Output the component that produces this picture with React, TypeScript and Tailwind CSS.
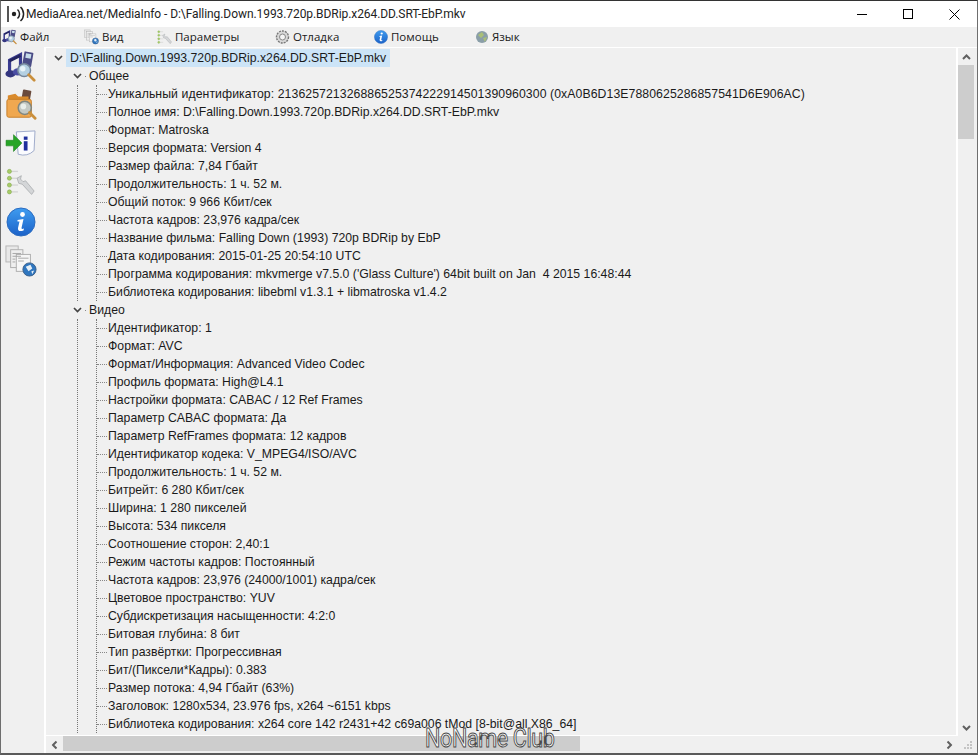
import type { ReactNode } from 'react'

type Group = { title: string; rows: string[] }

const groups: Group[] = [
  {
    title: 'Общее',
    rows: [
      'Уникальный идентификатор: 213625721326886525374222914501390960300 (0xA0B6D13E7880625286857541D6E906AC)',
      'Полное имя: D:\\Falling.Down.1993.720p.BDRip.x264.DD.SRT-EbP.mkv',
      'Формат: Matroska',
      'Версия формата: Version 4',
      'Размер файла: 7,84 Гбайт',
      'Продолжительность: 1 ч. 52 м.',
      'Общий поток: 9 966 Кбит/сек',
      'Частота кадров: 23,976 кадра/сек',
      'Название фильма: Falling Down (1993) 720p BDRip by EbP',
      'Дата кодирования: 2015-01-25 20:54:10 UTC',
      "Программа кодирования: mkvmerge v7.5.0 ('Glass Culture') 64bit built on Jan  4 2015 16:48:44",
      'Библиотека кодирования: libebml v1.3.1 + libmatroska v1.4.2'
    ]
  },
  {
    title: 'Видео',
    rows: [
      'Идентификатор: 1',
      'Формат: AVC',
      'Формат/Информация: Advanced Video Codec',
      'Профиль формата: High@L4.1',
      'Настройки формата: CABAC / 12 Ref Frames',
      'Параметр CABAC формата: Да',
      'Параметр RefFrames формата: 12 кадров',
      'Идентификатор кодека: V_MPEG4/ISO/AVC',
      'Продолжительность: 1 ч. 52 м.',
      'Битрейт: 6 280 Кбит/сек',
      'Ширина: 1 280 пикселей',
      'Высота: 534 пикселя',
      'Соотношение сторон: 2,40:1',
      'Режим частоты кадров: Постоянный',
      'Частота кадров: 23,976 (24000/1001) кадра/сек',
      'Цветовое пространство: YUV',
      'Субдискретизация насыщенности: 4:2:0',
      'Битовая глубина: 8 бит',
      'Тип развёртки: Прогрессивная',
      'Бит/(Пиксели*Кадры): 0.383',
      'Размер потока: 4,94 Гбайт (63%)',
      'Заголовок: 1280x534, 23.976 fps, x264 ~6151 kbps',
      'Библиотека кодирования: x264 core 142 r2431+42 c69a006 tMod [8-bit@all X86_64]'
    ]
  }
]

function AppIcon() {
  return (
    <svg width="19" height="18" viewBox="0 0 19 18" className="shrink-0">
      <rect x="0" y="1" width="2" height="16" fill="#555" />
      <circle cx="7" cy="9" r="2.2" fill="#222" />
      <path d="M10.5 4.5a6 6 0 0 1 0 9M13.5 2a9.5 9.5 0 0 1 0 14" fill="none" stroke="#222" strokeWidth="1.5" />
    </svg>
  )
}

function MusicGlass({ size }: { size: number }) {
  return (
    <svg width={size} height={size} viewBox="0 0 34 34">
      <path d="M5 24 L5 10 L17 4 L17 20" fill="none" stroke="#3a3c90" strokeWidth="3.5" />
      <path d="M5 11 L17 5" stroke="#23245f" strokeWidth="3" />
      <ellipse cx="6" cy="25" rx="5.5" ry="4" fill="#34367f" />
      <ellipse cx="14" cy="23" rx="5.5" ry="4" fill="#4a4da3" />
      <rect x="20" y="1" width="10" height="16" rx="1" fill="#4b4c86" transform="rotate(10 25 9)" />
      <rect x="22" y="3" width="6" height="5" fill="#c6dcea" transform="rotate(10 25 9)" />
      <circle cx="21" cy="21" r="7" fill="#b4d0e2" stroke="#74859a" strokeWidth="1.6" />
      <circle cx="19.5" cy="19.5" r="3" fill="#e8f3f8" />
      <path d="M26 26 L32 32" stroke="#c98f3c" strokeWidth="3" strokeLinecap="round" />
    </svg>
  )
}

function FolderGlass() {
  return (
    <svg width="32" height="32" viewBox="0 0 34 34">
      <rect x="18" y="1" width="9" height="14" rx="1" fill="#6a4a3c" transform="rotate(10 22 8)" />
      <path d="M3 11 L3 7 L11 5 L14 8 L25 8 L25 14 Z" fill="#d98a2c" />
      <rect x="2" y="11" width="26" height="19" rx="2" fill="#f0a850" stroke="#c57d28" />
      <circle cx="21" cy="20" r="7" fill="#c4c9c4" stroke="#80867f" strokeWidth="1.6" />
      <circle cx="19.5" cy="18.5" r="3" fill="#e9eeea" />
      <path d="M26 25 L32 31" stroke="#c98f3c" strokeWidth="3" strokeLinecap="round" />
    </svg>
  )
}

function ExportIcon() {
  return (
    <svg width="32" height="28" viewBox="0 0 34 30">
      <path d="M12 2 L32 1 L31 22 Q24 29 14 26 Z" fill="#fafbfe" stroke="#9aa7c8" />
      <rect x="20" y="7" width="4" height="3.5" fill="#1f2f9c" />
      <rect x="20" y="12" width="4" height="10" fill="#1f2f9c" />
      <path d="M1 11 L9 11 L9 5 L18 14 L9 23 L9 17 L1 17 Z" fill="#27a527" stroke="#1a7c1a" strokeWidth="0.6" />
    </svg>
  )
}

function WrenchIcon({ size }: { size: number }) {
  return (
    <svg width={size} height={size} viewBox="0 0 34 34">
      {[4, 12, 20, 28].map((y) => (
        <g key={y}>
          <path d={`M6 ${y} L14 ${y}`} stroke="#d4d4d4" strokeWidth="1.5" />
          <circle cx="4" cy={y} r="2.4" fill="#a8cc68" stroke="#7ba544" strokeWidth="0.6" />
        </g>
      ))}
      <path d="M13 12 L18 9 L17 13 L20 16 L23 15 L33 27 L30 31 L19 19 L15 18 Z" fill="#d4d6d8" stroke="#a0a3a7" strokeWidth="0.8" />
    </svg>
  )
}

function InfoBall({ size }: { size: number }) {
  return (
    <svg width={size} height={size} viewBox="0 0 30 30">
      <defs>
        <linearGradient id="ball" x1="0" y1="0" x2="0" y2="1">
          <stop offset="0" stopColor="#3f9cf0" />
          <stop offset="1" stopColor="#1c62c8" />
        </linearGradient>
      </defs>
      <circle cx="15" cy="15" r="14" fill="url(#ball)" stroke="#2c6cc0" />
      <circle cx="16.5" cy="7.5" r="2.4" fill="#fff" />
      <path d="M11.5 13 L17.5 12 L15.5 21 Q15.5 22.5 18 21.5 L17.5 23.5 Q11.5 25.5 12 21 L13.5 14.5 L11.5 14.5 Z" fill="#fff" />
    </svg>
  )
}

function DocsGlobe({ size }: { size: number }) {
  return (
    <svg width={size} height={size} viewBox="0 0 34 34">
      <rect x="1" y="1" width="13" height="17" fill="#e8e8e8" stroke="#b4b4b4" />
      <rect x="6" y="5" width="13" height="19" fill="#efefef" stroke="#adadad" />
      <rect x="12" y="10" width="15" height="18" fill="#f6f6f6" stroke="#adadad" />
      <path d="M8 9h9M8 12h9M8 15h3M8 18h3M14 14h11M14 17h6" stroke="#a4a4a4" />
      <circle cx="26" cy="26" r="7" fill="#2f76bf" stroke="#3b5f8a" />
      <path d="M22 23 L27 21 L29 25 L25 28 Z M28 28 L31 27 L29 31 Z" fill="#e4eef6" />
    </svg>
  )
}

function GlobeSmall() {
  return (
    <svg width="14" height="14" viewBox="0 0 14 14">
      <circle cx="7" cy="7" r="6" fill="#8a9ea8" />
      <path d="M3 5 L7 2 L9 5 L6 8 Z M8 8 L12 7 L10 12 Z" fill="#a9bf78" />
    </svg>
  )
}

function GearSmall() {
  return (
    <svg width="15" height="14" viewBox="0 0 15 14">
      <circle cx="7.5" cy="7" r="6" fill="#d8d8d8" stroke="#777" strokeWidth="1.4" strokeDasharray="2 1" />
      <circle cx="7.5" cy="7" r="3" fill="#f4f4f4" stroke="#888" />
    </svg>
  )
}

function Chevron() {
  return (
    <svg width="9" height="6" viewBox="0 0 9 6">
      <path d="M1 1 L4.5 4.5 L8 1" fill="none" stroke="#444" strokeWidth="1.7" />
    </svg>
  )
}

function ArrowBtn({ dir }: { dir: 'up' | 'down' | 'left' | 'right' }) {
  const rotate = { up: 'rotate-180', down: '', left: 'rotate-90', right: '-rotate-90' }[dir]
  return (
    <svg width="9" height="6" viewBox="0 0 9 6" className={rotate}>
      <path d="M1 1 L4.5 4.5 L8 1" fill="none" stroke="#606060" strokeWidth="2" />
    </svg>
  )
}

function MenuItem({ icon, label, width }: { icon: ReactNode; label: string; width: string }) {
  return (
    <div className={`flex h-5 items-center gap-[3px] ${width}`}>
      <span className="flex w-[15px] justify-center">{icon}</span>
      <span>{label}</span>
    </div>
  )
}

function TreeRow({ text }: { text: string }) {
  // the long digit string runs a little wider in the original's hinted font
  const wide = text.startsWith('Уникальный')
  return (
    <div className="flex h-[18px] items-center">
      <span className="w-[10px] border-t border-dotted border-[#888]" />
      <span className={`pl-[1px] whitespace-pre ${wide ? 'tracking-[0.08px]' : ''}`}>{text}</span>
    </div>
  )
}

function TreeGroup({ group }: { group: Group }) {
  return (
    <div>
      <div className="flex h-[18px] items-center">
        <span className="flex w-[10px] justify-center">
          <Chevron />
        </span>
        <span className="ml-[3px] mr-[3px] w-[1px] border-t border-dotted border-[#888]" />
        <span>{group.title}</span>
      </div>
      <div className="ml-[5px] border-l border-dotted border-[#777] pl-[18px]">
        <div className="border-l border-dotted border-[#777]">
          {group.rows.map((row) => (
            <TreeRow key={row} text={row} />
          ))}
        </div>
      </div>
    </div>
  )
}

export default function App() {
  return (
    <div className="relative flex h-[755px] w-[978px] flex-col overflow-hidden border-x border-b-2 border-t border-x-[#6e6e6e] border-b-[#5a5a5a] border-t-[#333] bg-[#f0f0f0] font-['Liberation_Sans',Arial,sans-serif] text-[12.25px] text-[#1a1a1a]">
      <div className="flex h-[26px] shrink-0 items-center bg-white pl-[6px]">
        <AppIcon />
        <span className="font-['Roboto',sans-serif] text-[12px] tracking-[-0.07px] text-[#222]">
          MediaArea.net/MediaInfo - D:\Falling.Down.1993.720p.BDRip.x264.DD.SRT-EbP.mkv
        </span>
        <div className="ml-auto flex h-full">
          <div className="flex w-[46px] items-center justify-center">
            <span className="h-px w-[10px] bg-black" />
          </div>
          <div className="flex w-[46px] items-center justify-center">
            <span className="h-[10px] w-[10px] border border-black" />
          </div>
          <div className="flex w-[46px] items-center justify-center">
            <svg width="11" height="11" viewBox="0 0 11 11">
              <path d="M.5.5l10 10M10.5.5l-10 10" stroke="#000" />
            </svg>
          </div>
        </div>
      </div>

      <div className="flex h-[20px] shrink-0 items-center pl-[1px] font-['Open_Sans',sans-serif] text-[11.5px]">
        <MenuItem icon={<MusicGlass size={16} />} label="Файл" width="w-[82px]" />
        <MenuItem icon={<DocsGlobe size={16} />} label="Вид" width="w-[73px]" />
        <MenuItem icon={<WrenchIcon size={15} />} label="Параметры" width="w-[118px]" />
        <MenuItem icon={<GearSmall />} label="Отладка" width="w-[98px]" />
        <MenuItem icon={<InfoBall size={14} />} label="Помощь" width="w-[101px]" />
        <MenuItem icon={<GlobeSmall />} label="Язык" width="w-[80px]" />
      </div>

      <div className="flex min-h-0 flex-1">
        <div className="flex w-[43px] shrink-0 flex-col items-center pr-[4px]">
          <div className="flex h-[38px] items-center justify-center"><MusicGlass size={31} /></div>
          <div className="flex h-[39px] items-center justify-center"><FolderGlass /></div>
          <div className="flex h-[39px] items-center justify-center"><ExportIcon /></div>
          <div className="flex h-[39px] items-center justify-center"><WrenchIcon size={29} /></div>
          <div className="flex h-[39px] items-center justify-center"><InfoBall size={30} /></div>
          <div className="flex h-[39px] items-center justify-center"><DocsGlobe size={32} /></div>
        </div>

        <div className="flex min-w-0 flex-1 flex-col border-l-2 border-t border-white">
          <div className="flex min-h-0 flex-1">
            <div className="min-w-0 flex-1 overflow-hidden border-b border-r-2 border-white pl-[7px] pt-[1px]">
              <div className="flex h-[18px] items-center">
                <span className="flex w-[10px] justify-center">
                  <Chevron />
                </span>
                <span className="ml-[3px] bg-[#cce4f7] px-[4px] leading-[18px]">
                  D:\Falling.Down.1993.720p.BDRip.x264.DD.SRT-EbP.mkv
                </span>
              </div>
              <div className="pl-[19px]">
                {groups.map((group) => (
                  <TreeGroup key={group.title} group={group} />
                ))}
              </div>
            </div>
            <div className="flex w-[19px] shrink-0 flex-col">
              <div className="flex h-[17px] items-center justify-center pr-[3px]">
                <ArrowBtn dir="up" />
              </div>
              <div className="mr-[3px] h-[74px] bg-[#cdcdcd]" />
              <div className="flex-1" />
              <div className="flex h-[17px] items-center justify-center pr-[3px]">
                <ArrowBtn dir="down" />
              </div>
            </div>
          </div>
          <div className="flex h-[17px] shrink-0">
            <div className="flex w-[17px] items-center justify-center">
              <ArrowBtn dir="left" />
            </div>
            <div className="h-[15px] w-[517px] bg-[#cdcdcd]" />
            <div className="flex-1" />
            <div className="flex w-[17px] items-center justify-center">
              <ArrowBtn dir="right" />
            </div>
            <div className="flex w-[19px] items-end justify-center pb-[2px]">
              <svg width="11" height="11" viewBox="0 0 11 11">
                <path d="M8 1h2v2H8zM5 4h2v2H5zM8 4h2v2H8zM2 7h2v2H2zM5 7h2v2H5zM8 7h2v2H8z" fill="#c4c4c4" />
              </svg>
            </div>
          </div>
        </div>
      </div>

      {/* tracker watermark over the scrollbar */}
      <div className="absolute left-[424px] top-[719px] origin-left scale-x-[0.86] font-['Roboto',sans-serif] text-[25px] tracking-[-0.4px] text-white [-webkit-text-stroke:1px_#4a4a4a]">
        NoName Club
      </div>
    </div>
  )
}
